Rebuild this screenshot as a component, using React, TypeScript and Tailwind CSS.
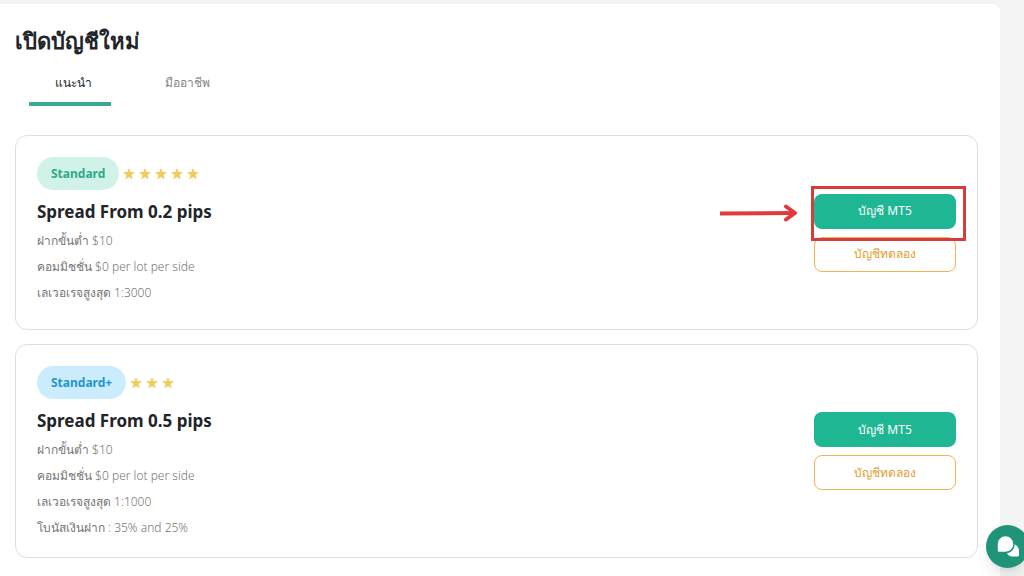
import { clsx } from "clsx";

type Account = {
  name: string;
  badgeClass: string;
  stars: number;
  spread: string;
  details: string[];
  highlighted?: boolean;
};

const tabs = [
  { label: "แนะนำ", active: true },
  { label: "มืออาชีพ", active: false },
];

const accounts: Account[] = [
  {
    name: "Standard",
    badgeClass: "bg-[#d1f2e9] text-[#2fa98a]",
    stars: 5,
    spread: "Spread From 0.2 pips",
    details: ["ฝากขั้นต่ำ $10", "คอมมิชชั่น $0 per lot per side", "เลเวอเรจสูงสุด 1:3000"],
    highlighted: true,
  },
  {
    name: "Standard+",
    badgeClass: "bg-[#caecfd] text-[#2496cb]",
    stars: 3,
    spread: "Spread From 0.5 pips",
    details: [
      "ฝากขั้นต่ำ $10",
      "คอมมิชชั่น $0 per lot per side",
      "เลเวอเรจสูงสุด 1:1000",
      "โบนัสเงินฝาก : 35% and 25%",
    ],
  },
];

function Star() {
  return (
    <svg viewBox="0 0 24 24" className="size-3 fill-[#efcd5c]" aria-hidden>
      <path d="M12 0l3.1 8.2 8.9.5-6.9 5.5 2.3 8.8L12 18.2 4.6 23l2.3-8.8L0 8.7l8.9-.5z" />
    </svg>
  );
}

function Callout() {
  return (
    <>
      <span className="pointer-events-none absolute -inset-x-[3px] -top-2 h-[55px] w-[155px] border-3 border-[#d63c3c]" />
      <svg
        viewBox="0 0 78 18"
        className="pointer-events-none absolute top-[10px] right-full mr-4 h-[18px] w-[78px]"
        fill="none"
        stroke="#e03a3a"
        strokeWidth="4"
        aria-hidden
      >
        <path d="M0 9.5L74 9" />
        <path d="M66 2.5L75 9l-9 6.5" strokeLinecap="round" strokeLinejoin="round" />
      </svg>
    </>
  );
}

function AccountCard({ account }: { account: Account }) {
  return (
    <section className="flex min-h-[195px] items-center justify-between rounded-xl border border-[#dedede] px-[21px]">
      <div className="self-start pt-[21px] pb-4">
        <div className="flex items-center gap-1">
          <span
            className={clsx(
              "flex h-[33px] items-center rounded-full px-[14px] pt-px text-[12px] font-bold",
              account.badgeClass
            )}
          >
            {account.name}
          </span>
          <span className="flex gap-1" role="img" aria-label={`${account.stars} stars`}>
            {Array.from({ length: account.stars }, (_, i) => (
              <Star key={i} />
            ))}
          </span>
        </div>
        <h2 className="mt-2 text-[17px] leading-7 font-bold text-[#212529]">{account.spread}</h2>
        <ul className="mt-[2px] text-[12px] leading-[26px] font-light text-[#757575]">
          {account.details.map((line) => (
            <li key={line}>{line}</li>
          ))}
        </ul>
      </div>
      <div className="relative flex w-[142px] flex-col gap-2">
        <button className="h-[35px] rounded-lg bg-[#1fb693] text-[12px] text-white">บัญชี MT5</button>
        <button className="h-[35px] rounded-lg border border-[#ecb654] text-[12px] text-[#dfa02f]">
          บัญชีทดลอง
        </button>
        {account.highlighted && <Callout />}
      </div>
    </section>
  );
}

export default function App() {
  return (
    <div className="flex h-screen flex-col overflow-hidden bg-[#f4f4f4] pt-1 pr-6 font-['Noto_Sans','Open_Sans',sans-serif]">
      <main className="flex-1 rounded-tr-lg bg-white pr-[22px] pl-[15px]">
        <h1 className="pt-5 pb-1 text-[22px] leading-8 font-bold text-[#212529]">เปิดบัญชีใหม่</h1>
        <nav className="flex gap-8 pl-[14px]">
          {tabs.map((tab) => (
            <button
              key={tab.label}
              className={clsx(
                "h-[46px] w-[82px] border-b-4 pt-1 pl-1.5 text-[12px]",
                tab.active
                  ? "border-[#38ab91] font-medium text-[#212529]"
                  : "border-transparent text-[#858585]"
              )}
            >
              {tab.label}
            </button>
          ))}
        </nav>
        <div className="mt-[29px] flex flex-col gap-[14px]">
          {accounts.map((account) => (
            <AccountCard key={account.name} account={account} />
          ))}
        </div>
      </main>
      <button
        aria-label="Chat"
        className="fixed -right-[5px] bottom-2 flex size-[43px] items-center justify-center rounded-full bg-[#1f9478] shadow-lg"
      >
        <svg viewBox="0 0 24 24" className="size-6" aria-hidden>
          <path
            d="M17 8.500c3.500 1.500 6 4 6 7.500V20a1.500 1.500 0 0 1-1.500 1.500H17c-3.500 0-6-2-6.500-5z"
            fill="#fff"
          />
          <path
            d="M9.500 .5a8.500 8.500 0 0 1 8.500 8.500c0 5-3.500 8.500-8.500 8.500H3A2 2 0 0 1 1 15.500V9a8.500 8.500 0 0 1 8.500-8.500z"
            fill="#fff"
            stroke="#1f9478"
            strokeWidth="1.5"
          />
        </svg>
      </button>
    </div>
  );
}
